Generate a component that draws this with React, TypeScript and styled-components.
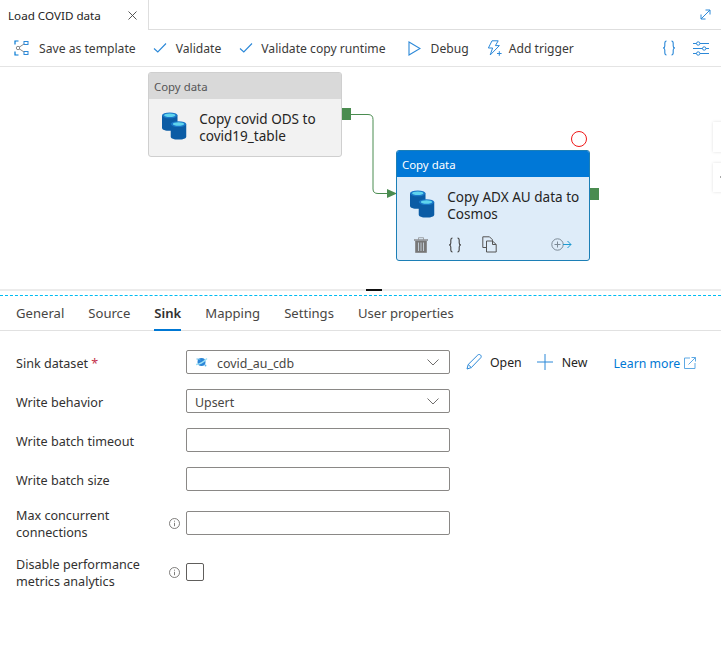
import React from "react";
import styled, { createGlobalStyle } from "styled-components";

const GlobalStyle = createGlobalStyle`
  html, body {
    margin: 0;
    padding: 0;
    background: #fff;
    font-family: "Noto Sans", "Open Sans", sans-serif;
    color: #323130;
  }
  * { box-sizing: border-box; }
`;

const BLUE = "#2b88d8";

const Page = styled.div`
  width: 721px;
  height: 645px;
  overflow: hidden;
  background: #fff;
`;

const TabStrip = styled.div`
  height: 30px;
  display: flex;
  align-items: stretch;
`;

const FileTab = styled.div`
  width: 149px;
  border-right: 1px solid #dedede;
  padding: 0 11px 0 8px;
  display: flex;
  align-items: center;
  justify-content: space-between;
  font-size: 11.65px;
  color: #252423;
`;

const StripRest = styled.div`
  flex: 1;
  border-bottom: 1.5px solid #dedede;
  display: flex;
  align-items: center;
  justify-content: flex-end;
  padding-right: 10px;
`;

const Toolbar = styled.div`
  height: 37px;
  border-bottom: 1.5px solid #e4e4e4;
  padding: 0 12px 0 14px;
  display: flex;
  align-items: center;
  font-size: 12.15px;
  color: #3b3a39;
`;

const ToolItem = styled.div<{ $gap: number; $next: number }>`
  display: flex;
  align-items: center;
  gap: ${(p) => p.$gap}px;
  margin-right: ${(p) => p.$next}px;
  white-space: nowrap;
`;

const ToolRight = styled.div`
  margin-left: auto;
  display: flex;
  align-items: center;
  gap: 17px;
`;

const Canvas = styled.div`
  position: relative;
  height: 222px;
`;

const Node = styled.div<{ $x: number; $y: number; $w: number; $h: number; $selected?: boolean }>`
  position: absolute;
  left: ${(p) => p.$x}px;
  top: ${(p) => p.$y}px;
  width: ${(p) => p.$w}px;
  height: ${(p) => p.$h}px;
  border-radius: 3px;
  border: 1px solid ${(p) => (p.$selected ? "#1c7fb6" : "#cfcfcf")};
  background: ${(p) => (p.$selected ? "#deecf9" : "#f2f2f2")};
  overflow: hidden;
`;

const NodeHeader = styled.div<{ $selected?: boolean }>`
  height: 26px;
  padding-left: 5px;
  display: flex;
  align-items: center;
  font-size: 11.4px;
  background: ${(p) => (p.$selected ? "#0078d7" : "#d9d9d9")};
  color: ${(p) => (p.$selected ? "#fff" : "#555")};
`;

const NodeBody = styled.div<{ $top: number }>`
  padding: ${(p) => p.$top}px 6px 0 13px;
  display: flex;
  align-items: flex-start;
  gap: 12px;
`;

const NodeName = styled.div`
  font-size: 13.55px;
  line-height: 17px;
  color: #252423;
  width: 140px;
  margin-top: -1px;
`;

const NodeActions = styled.div`
  position: absolute;
  left: 17px;
  top: 85px;
  width: 158px;
  display: flex;
  align-items: center;
  gap: 20px;
`;

const ActionsEnd = styled.div`
  margin-left: auto;
  display: flex;
`;

const Port = styled.div<{ $x: number; $y: number }>`
  position: absolute;
  left: ${(p) => p.$x}px;
  top: ${(p) => p.$y}px;
  width: 9px;
  height: 12px;
  background: #4a8c50;
`;

const RedRing = styled.div`
  position: absolute;
  left: 571px;
  top: 64px;
  width: 16px;
  height: 16px;
  border: 1px solid #f01818;
  border-radius: 50%;
  background: #fff;
`;

const SideNub = styled.div<{ $y: number; $h: number; $mark?: boolean }>`
  position: absolute;
  left: 713px;
  top: ${(p) => p.$y}px;
  width: 12px;
  height: ${(p) => p.$h}px;
  background: #fff;
  box-shadow: 0 0 3px rgba(0, 0, 0, 0.13);
  &::after {
    content: "";
    display: ${(p) => (p.$mark ? "block" : "none")};
    position: absolute;
    left: 7px;
    top: 13px;
    width: 3px;
    height: 2px;
    background: #aaa;
  }
`;

const Link = styled.svg`
  position: absolute;
  left: 0;
  top: 0;
  pointer-events: none;
`;

const Splitter = styled.div`
  position: relative;
  height: 7px;
  border-top: 2px solid #ececec;
  border-bottom: 1px dashed #00bcf2;
`;

const Grip = styled.div`
  position: absolute;
  left: 366px;
  top: -2px;
  width: 16px;
  height: 2px;
  background: #111;
`;

const TabBar = styled.div`
  height: 35px;
  padding-left: 16px;
  border-bottom: 1.5px solid #e1e1e1;
  display: flex;
  gap: 24px;
  font-size: 13.1px;
  color: #484644;
`;

const PaneTab = styled.div<{ $active?: boolean }>`
  position: relative;
  display: flex;
  align-items: center;
  font-weight: ${(p) => (p.$active ? 600 : 400)};
  color: ${(p) => (p.$active ? "#323130" : "#484644")};
  &::after {
    content: "";
    display: ${(p) => (p.$active ? "block" : "none")};
    position: absolute;
    left: 0;
    right: 0;
    bottom: -1px;
    height: 2px;
    background: #0078d4;
  }
`;

const Form = styled.div`
  padding: 19px 0 0 16px;
  display: flex;
  flex-direction: column;
  gap: 15px;
`;

const Row = styled.div`
  display: flex;
  align-items: center;
  min-height: 24px;
`;

const LabelCell = styled.div`
  width: 170px;
  display: flex;
  align-items: center;
  justify-content: space-between;
  padding-right: 6px;
`;

const Label = styled.div`
  font-size: 12.6px;
  line-height: 17px;
  color: #323130;
  width: 132px;
  padding-top: 1px;
  margin-bottom: -1px;
`;

const Required = styled.span`
  color: #c4314b;
`;

const Field = styled.div`
  width: 264px;
  height: 24px;
  border: 1px solid #8a8886;
  border-radius: 2px;
  padding: 0 10px 0 8px;
  display: flex;
  align-items: center;
  font-size: 12.4px;
  color: #484644;
`;

const FieldText = styled.span<{ $indent?: number }>`
  flex: 1;
  padding-top: 2px;
  padding-left: ${(p) => p.$indent ?? 0}px;
`;

const Check = styled.div`
  width: 18px;
  height: 18px;
  border: 1px solid #605e5c;
  border-radius: 2px;
`;

const LinkActions = styled.div`
  display: flex;
  align-items: center;
  font-size: 12.3px;
  color: #252423;
  margin-left: 16px;
`;

const LinkAction = styled.div<{ $gap: number; $next: number }>`
  display: flex;
  align-items: center;
  gap: ${(p) => p.$gap}px;
  margin-right: ${(p) => p.$next}px;
`;

const LearnMore = styled.div`
  display: flex;
  align-items: center;
  gap: 4px;
  margin-top: 2px;
  color: #0078d4;
`;

const Check16 = () => (
  <svg width="14" height="12" viewBox="0 0 14 12" fill="none" stroke={BLUE} strokeWidth="1.1">
    <path d="M1 6.5 L4.8 10 L13 1.5" />
  </svg>
);

const TemplateIcon = () => (
  <svg width="16" height="16" viewBox="0 0 16 16" fill="none" stroke="#0078d4" strokeWidth="1">
    <path d="M1 4.5V1h3.5M1 11.5V15h3.5" strokeWidth="1.2" />
    <rect x="10" y="1.5" width="4" height="3" stroke="#2b88d8" />
    <rect x="10" y="11.5" width="4" height="3" stroke="#2b88d8" />
    <path d="M4 8 L10 4M4 8l6 4" stroke="#8a8a8a" />
    <circle cx="4" cy="8" r="1.7" fill="#fff" stroke="#8a8a8a" />
  </svg>
);

const PlayIcon = () => (
  <svg width="13" height="15" viewBox="0 0 13 15" fill="none" stroke={BLUE} strokeWidth="1.1">
    <path d="M1 1 L12 7.5 L1 14 Z" />
  </svg>
);

const TriggerIcon = () => (
  <svg width="15" height="17" viewBox="0 0 15 17" fill="none" stroke={BLUE} strokeWidth="1">
    <path d="M5 .8h6.2L8.4 5.6h4L3.2 15 5.6 8H1.4Z" />
    <path d="M10 13.5h4.6M12.3 11.2v4.6" />
  </svg>
);

const Braces = ({ color = BLUE }: { color?: string }) => (
  <svg width="14" height="16" viewBox="0 0 14 16" fill="none" stroke={color} strokeWidth="1.1">
    <path d="M4.5 1C2.8 1 2.8 2 2.8 3.5V6c0 1-.6 2-1.8 2 1.2 0 1.8 1 1.8 2v2.5c0 1.5 0 2.5 1.7 2.5" />
    <path d="M9.5 1c1.7 0 1.7 1 1.7 2.5V6c0 1 .6 2 1.8 2-1.2 0-1.8 1-1.8 2v2.5c0 1.5 0 2.5-1.7 2.5" />
  </svg>
);

const SlidersIcon = () => (
  <svg width="16" height="15" viewBox="0 0 16 15" fill="none" stroke={BLUE} strokeWidth="1">
    <path d="M0 2.5h3.5M7 2.5h9M0 7.5h9.5M13 7.5h3M0 12.5h3.5M7 12.5h9" />
    <circle cx="5.2" cy="2.5" r="1.7" />
    <circle cx="11.2" cy="7.5" r="1.7" />
    <circle cx="5.2" cy="12.5" r="1.7" />
  </svg>
);

const ExpandIcon = () => (
  <svg width="11" height="11" viewBox="0 0 11 11" fill="none" stroke={BLUE} strokeWidth="1">
    <path d="M1 10 L10 1M5.5 1H10V5.5M1 5.5V10H5.5" />
  </svg>
);

const CloseIcon = () => (
  <svg width="9" height="9" viewBox="0 0 9 9" fill="none" stroke="#444" strokeWidth="0.9">
    <path d="M.5.5l8 8M8.5.5l-8 8" />
  </svg>
);

const Cylinder = ({ x, y }: { x: number; y: number }) => (
  <g transform={`translate(${x} ${y})`}>
    <path d="M0 3v13c0 1.7 3.6 3 8 3s8-1.3 8-3V3Z" fill="#0b5ca5" />
    <ellipse cx="8" cy="3" rx="8" ry="3" fill="#1a78c8" />
    <ellipse cx="8" cy="3" rx="5.8" ry="1.8" fill="#5fd4ee" />
  </g>
);

const DbIcon = () => (
  <svg width="26" height="29" viewBox="0 0 26 29">
    <Cylinder x={0} y={0} />
    <Cylinder x={9} y={9} />
  </svg>
);

const TrashIcon = () => (
  <svg width="14" height="16" viewBox="0 0 14 16" fill="#777" stroke="#777" strokeWidth="0.6">
    <path d="M0 2.5h14v1H0ZM4.5 2.5V.7h5v1.8" fill="none" />
    <path d="M1.5 4h11v11.5h-11Z" />
    <path d="M4.5 5.5v8.5M7 5.5v8.5M9.5 5.5v8.5" stroke="#deecf9" strokeWidth="0.7" />
  </svg>
);

const CopyIcon = () => (
  <svg width="15" height="17" viewBox="0 0 15 17" fill="none" stroke="#555" strokeWidth="1">
    <path d="M4.5 11.5H.8V.8h6.7l3 3v1" />
    <path d="M4.5 5h6l3.7 3.5V16H4.5Z" fill="#deecf9" />
    <path d="M10.5 5v3.5h3.7" />
  </svg>
);

const AddOutIcon = () => (
  <svg width="21" height="13" viewBox="0 0 21 13" fill="none" strokeWidth="1">
    <circle cx="6.5" cy="6.5" r="5.7" stroke="#7c8a96" />
    <path d="M3.5 6.5h6M6.5 3.5v6" stroke="#7c8a96" />
    <path d="M12 6.5h8M16.5 3l3.5 3.5-3.5 3.5" stroke="#1f9ad0" />
  </svg>
);

const CosmosIcon = () => (
  <svg width="13" height="12" viewBox="0 0 13 12" fill="none">
    <circle cx="6.5" cy="6" r="4" fill="#2a86d8" />
    <path d="M1 8.5C4 8.5 9 5.5 12 2.5" stroke="#9fe0f5" strokeWidth="1.5" />
    <path d="M1.5 3c1.5 0 3 .2 4 1" stroke="#59b4e8" strokeWidth="1" />
    <circle cx="10.5" cy="9.5" r="0.9" fill="#59b4e8" />
  </svg>
);

const Chevron = () => (
  <svg width="12" height="7" viewBox="0 0 12 7" fill="none" stroke="#605e5c" strokeWidth="0.9">
    <path d="M.5.5 6 6 11.5.5" />
  </svg>
);

const PencilIcon = () => (
  <svg width="16" height="16" viewBox="0 0 16 16" fill="none" stroke={BLUE} strokeWidth="1">
    <path d="M1 15 2.2 10.5 11.8 1c.8-.7 2-.7 2.8.1s.8 2 .1 2.7L5.3 13.6Z" />
    <path d="M2.2 10.5l3.1 3.1" />
  </svg>
);

const PlusIcon = () => (
  <svg width="16" height="16" viewBox="0 0 16 16" fill="none" stroke={BLUE} strokeWidth="1">
    <path d="M0 8h16M8 0v16" />
  </svg>
);

const ExternalIcon = () => (
  <svg width="12" height="12" viewBox="0 0 12 12" fill="none" stroke="#5ea9e4" strokeWidth="1">
    <path d="M6 1H.5v10.5H11V6" />
    <path d="M4.5 7.5 11.5.5M7.5.5h4v4" />
  </svg>
);

const InfoIcon = () => (
  <svg width="11" height="11" viewBox="0 0 11 11" fill="none" stroke="#605e5c" strokeWidth="0.8">
    <circle cx="5.5" cy="5.5" r="5" />
    <path d="M5.5 4.8v3.4M5.5 2.7v1" />
  </svg>
);

const rows = [
  { label: "Write batch timeout" },
  { label: "Write batch size" },
  { label: "Max concurrent connections", info: true },
];

export default function App() {
  return (
    <Page>
      <GlobalStyle />
      <TabStrip>
        <FileTab>
          Load COVID data
          <CloseIcon />
        </FileTab>
        <StripRest>
          <ExpandIcon />
        </StripRest>
      </TabStrip>
      <Toolbar>
        <ToolItem $gap={9} $next={17}>
          <TemplateIcon />
          Save as template
        </ToolItem>
        <ToolItem $gap={9} $next={18}>
          <Check16 />
          Validate
        </ToolItem>
        <ToolItem $gap={8} $next={22}>
          <Check16 />
          Validate copy runtime
        </ToolItem>
        <ToolItem $gap={10} $next={18}>
          <PlayIcon />
          Debug
        </ToolItem>
        <ToolItem $gap={7} $next={0}>
          <TriggerIcon />
          Add trigger
        </ToolItem>
        <ToolRight>
          <Braces />
          <SlidersIcon />
        </ToolRight>
      </Toolbar>
      <Canvas>
        <Link width="721" height="222">
          <path
            d="M351 47.5H368q5 0 5 5V122q0 4.5 5 4.5H388"
            fill="none"
            stroke="#4a8c50"
            strokeWidth="1"
          />
          <path d="M387 122 L397 126.5 L387 131 Z" fill="#4a8c50" />
        </Link>
        <Node $x={148} $y={5} $w={194} $h={85}>
          <NodeHeader>Copy data</NodeHeader>
          <NodeBody $top={13}>
            <DbIcon />
            <NodeName>Copy covid ODS to covid19_table</NodeName>
          </NodeBody>
        </Node>
        <Port $x={342} $y={41} />
        <Node $x={396} $y={83} $w={194} $h={111} $selected>
          <NodeHeader $selected>Copy data</NodeHeader>
          <NodeBody $top={13}>
            <DbIcon />
            <NodeName>Copy ADX AU data to Cosmos</NodeName>
          </NodeBody>
          <NodeActions>
            <TrashIcon />
            <Braces color="#444" />
            <CopyIcon />
            <ActionsEnd>
              <AddOutIcon />
            </ActionsEnd>
          </NodeActions>
        </Node>
        <Port $x={590} $y={121} />
        <RedRing />
        <SideNub $y={55} $h={30} />
        <SideNub $y={96} $h={29} $mark />
      </Canvas>
      <Splitter>
        <Grip />
      </Splitter>
      <TabBar>
        <PaneTab>General</PaneTab>
        <PaneTab>Source</PaneTab>
        <PaneTab $active>Sink</PaneTab>
        <PaneTab>Mapping</PaneTab>
        <PaneTab>Settings</PaneTab>
        <PaneTab>User properties</PaneTab>
      </TabBar>
      <Form>
        <Row>
          <LabelCell>
            <Label>
              Sink dataset <Required>*</Required>
            </Label>
          </LabelCell>
          <Field>
            <CosmosIcon />
            <FieldText $indent={9}>covid_au_cdb</FieldText>
            <Chevron />
          </Field>
          <LinkActions>
            <LinkAction $gap={8} $next={15}>
              <PencilIcon />
              Open
            </LinkAction>
            <LinkAction $gap={9} $next={26}>
              <PlusIcon />
              New
            </LinkAction>
            <LearnMore>
              Learn more
              <ExternalIcon />
            </LearnMore>
          </LinkActions>
        </Row>
        <Row>
          <LabelCell>
            <Label>Write behavior</Label>
          </LabelCell>
          <Field>
            <FieldText>Upsert</FieldText>
            <Chevron />
          </Field>
        </Row>
        {rows.map((r) => (
          <Row key={r.label}>
            <LabelCell>
              <Label>{r.label}</Label>
              {r.info && <InfoIcon />}
            </LabelCell>
            <Field />
          </Row>
        ))}
        <Row>
          <LabelCell>
            <Label>Disable performance metrics analytics</Label>
            <InfoIcon />
          </LabelCell>
          <Check />
        </Row>
      </Form>
    </Page>
  );
}
